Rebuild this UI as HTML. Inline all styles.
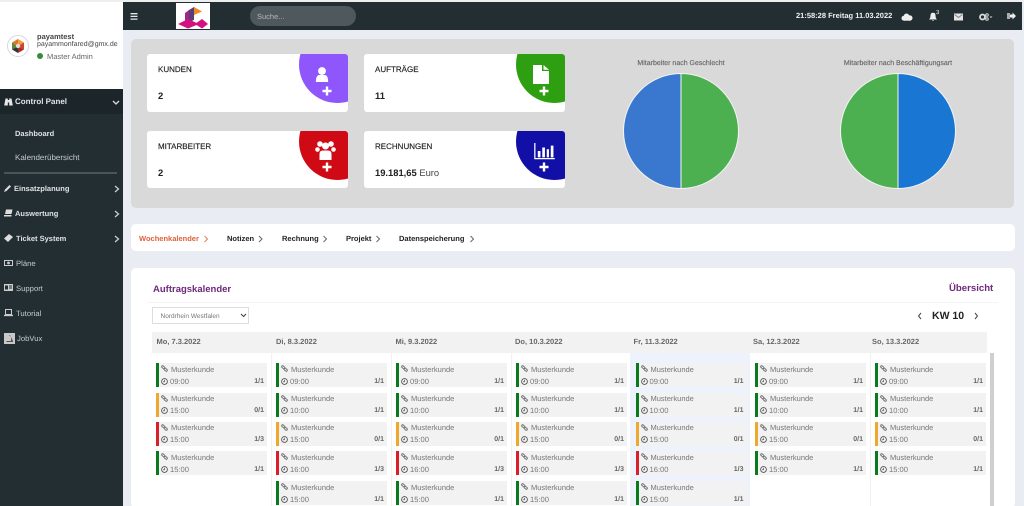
<!DOCTYPE html>
<html lang="de"><head><meta charset="utf-8"><title>Dashboard</title>
<style>
*{box-sizing:border-box}
html,body{margin:0;padding:0;width:1024px;height:506px;overflow:hidden;background:#e9edf3;font-family:"Liberation Sans",sans-serif}
#p{position:relative;width:1024px;height:506px;overflow:hidden;text-rendering:geometricPrecision;filter:blur(.35px);background:#e9edf3}
#p div,#p svg{position:absolute}
.t{position:absolute;white-space:nowrap;line-height:12px;margin-top:1px}
.card{background:#fff;border-radius:3px;overflow:hidden;width:201px;height:58px}
.blob{width:77px;height:77px;border-radius:50%;left:152px;top:-28px}
.ct{left:11px;top:9px;font-size:8px;color:#222;-webkit-text-stroke:.15px #222}
.cv{left:11px;top:34.5px;font-size:9.4px;color:#222;font-weight:bold}
.nav{font-size:7.5px;font-weight:bold;color:#dfe3e4}
.sub{font-size:7.7px;color:#c4cacc}
.bc{font-size:7.5px;font-weight:bold;color:#222;top:232px}
.dh{font-size:7.5px;font-weight:bold;color:#666;top:335px}
.e{width:111px;height:24px;background:#f2f2f2;border-left:3px solid #0a7a1e}
.g{border-left-color:#0a7a1e}.o{border-left-color:#eda92f}.r{border-left-color:#d8202a}
.e span{position:absolute;white-space:nowrap;line-height:12px;margin-top:.7px}
.e .m{left:12px;top:0;font-size:7.5px;color:#777}
.e .h{left:11px;top:12px;font-size:7.6px;color:#777}
.e .n{right:3px;top:12px;font-size:7px;font-weight:bold;color:#666}
.e svg{left:2px;width:7px;height:7px}
.e svg.l{top:2px}.e svg.c{top:14.500px}
</style></head><body>
<div id="p">
<svg width="0" height="0" style="left:0;top:0"><defs>
<symbol id="lk" viewBox="0 0 14 14"><g fill="none" stroke="#777" stroke-width="2"><rect x="1" y="2.500" width="7" height="4" rx="2" transform="rotate(40 4.500 4.500)"/><rect x="6" y="7.500" width="7" height="4" rx="2" transform="rotate(40 9.500 9.500)"/></g></symbol>
<symbol id="ck" viewBox="0 0 14 14"><circle cx="7" cy="7" r="5.800" fill="none" stroke="#555" stroke-width="1.800"/><path d="M7 3.500V7.500H4" fill="none" stroke="#555" stroke-width="1.400"/></symbol>
</defs></svg>

<!-- top strip / top bar -->
<div style="left:0;top:0;width:1024px;height:2px;background:#eeeeee"></div>
<div style="left:123px;top:2px;width:899px;height:28px;background:#232e33"></div>
<svg style="left:130px;top:13px" width="8" height="7" viewBox="0 0 8 7"><path d="M.5 .7H7.500M.5 3.400H7.500M.5 6.100H7.500" stroke="#e6e6e6" stroke-width="1.300"/></svg>
<div style="left:176px;top:3px;width:34px;height:26px;background:#fff"></div>
<svg style="left:176px;top:3px" width="34" height="26" viewBox="0 0 34 26"><path d="M9 10L13 7V19L9 21Z" fill="#a0268a"/><path d="M13 7L18 4V17L13 19Z" fill="#5a3c78"/><path d="M18 4L26 8.500L18 12Z" fill="#f08a1d"/><path d="M2 21L12 16L23 21L12 25.500Z" fill="#d3127f"/><path d="M19 21L26 16L32 21L26 25.500Z" fill="#d3127f"/></svg>
<div style="left:250px;top:6px;width:106px;height:20px;border-radius:10px;background:#4f585c"></div>
<div class="t" style="left:257px;top:9.500px;font-size:7.500px;color:#b4b8ba">Suche...</div>
<div class="t" style="left:796px;top:8.500px;font-size:7.500px;font-weight:bold;color:#f0f0f0">21:58:28 Freitag 11.03.2022</div>
<svg style="left:901px;top:13px" width="12" height="8" viewBox="0 0 12 8"><circle cx="3" cy="5.200" r="2.500" fill="#eee"/><circle cx="5.500" cy="3.200" r="2.700" fill="#eee"/><circle cx="8.800" cy="5" r="2.700" fill="#eee"/><rect x="3" y="5" width="6" height="2.700" fill="#eee"/></svg>
<svg style="left:927.500px;top:12px" width="10" height="9" viewBox="0 0 10 9"><path d="M1 7.500Q2.500 6 2.500 3.500Q2.500 .8 5 .8Q7.500 .8 7.500 3.500Q7.500 6 9 7.500ZM4 8H6L5 9Z" fill="#eee"/></svg>
<div class="t" style="left:936px;top:6px;font-size:6px;color:#eee">3</div>
<svg style="left:954px;top:13px" width="9" height="8" viewBox="0 0 9 8"><rect width="9" height="7" y=".5" fill="#e4e4e4"/><path d="M.5 1.500L4.500 4.500L8.500 1.500" fill="none" stroke="#777" stroke-width=".8"/></svg>
<svg style="left:979px;top:12.500px" width="14" height="8" viewBox="0 0 14 8"><circle cx="3.500" cy="4" r="2.500" fill="none" stroke="#ddd" stroke-width="1.800"/><circle cx="8" cy="2" r="1.300" fill="none" stroke="#ddd"/><circle cx="8" cy="6" r="1.300" fill="none" stroke="#ddd"/><path d="M10.500 3.500H13.500L12 5Z" fill="#ddd"/></svg>
<svg style="left:1007px;top:12px" width="9" height="8" viewBox="0 0 9 8"><path d="M0 1H3V7H0Z" fill="#aaa"/><path d="M3 2.500H5.500V.5L9 4L5.500 7.500V5.500H3Z" fill="#eee"/></svg>

<!-- sidebar -->
<div style="left:0;top:2px;width:123px;height:87px;background:#fff"></div>
<div style="left:0;top:89px;width:123px;height:417px;background:#232e33"></div>
<div style="left:0;top:89px;width:123px;height:25px;background:#1b252a"></div>
<div style="left:7px;top:35px;width:22px;height:22px;border-radius:50%;background:#fff;border:1.500px solid #d5d8de"></div>
<svg style="left:10px;top:38px" width="16" height="16" viewBox="0 0 16 16"><path d="M8 8L8 1L14 4.500Z" fill="#e8a33a"/><path d="M8 8L14 4.500V11.500Z" fill="#d4432a"/><path d="M8 8L14 11.500L8 15Z" fill="#a82e24"/><path d="M8 8L8 15L2 11.500Z" fill="#333"/><path d="M8 8L2 11.500V4.500Z" fill="#5a8a3a"/><path d="M8 8L2 4.500L8 1Z" fill="#e8702a"/><circle cx="8" cy="8" r="2.200" fill="#ddd"/></svg>
<div class="t" style="left:37px;top:29.500px;font-size:7.500px;font-weight:bold;color:#444">payamtest</div>
<div class="t" style="left:37px;top:37.500px;font-size:7px;color:#444">payammonfared@gmx.de</div>
<div style="left:37px;top:53px;width:6px;height:6px;border-radius:50%;background:#3a8a3a"></div>
<div class="t" style="left:47px;top:50px;font-size:7.500px;color:#666">Master Admin</div>

<svg style="left:4px;top:97px" width="9" height="9" viewBox="0 0 9 9"><path d="M.2 8.500L1.500 1.500H3.800V8.500ZM5.200 8.500V1.500H7.500L8.800 8.500ZM3.800 3H5.200V5.500H3.800Z" fill="#e6e6e6"/></svg>
<div class="t nav" style="left:15px;top:95px;font-size:8px">Control Panel</div>
<svg style="left:112px;top:100px" width="8" height="5" viewBox="0 0 8 5"><path d="M1 1L4 4L7 1" fill="none" stroke="#ddd" stroke-width="1.300"/></svg>
<div class="t nav" style="left:15px;top:127px">Dashboard</div>
<div class="t sub" style="left:15px;top:151px;font-size:8px">Kalenderübersicht</div>
<div style="left:4px;top:172px;width:113px;height:1.500px;background:#4a5557"></div>
<svg style="left:4px;top:184px" width="8" height="8" viewBox="0 0 8 8"><path d="M0 8L1 5.500L5.500 1L7 2.500L2.500 7Z" fill="#ddd"/></svg>
<div class="t nav" style="left:14px;top:182px">Einsatzplanung</div>
<svg style="left:114px;top:185px" width="6" height="8" viewBox="0 0 6 8"><path d="M1 1L4.500 4L1 7" fill="none" stroke="#ccc" stroke-width="1.300"/></svg>
<svg style="left:4px;top:209px" width="9" height="8" viewBox="0 0 9 8"><path d="M2 .5H8.500L7.500 5H1ZM0 6H7.500V7.500H0Z" fill="#ddd"/></svg>
<div class="t nav" style="left:15px;top:207px">Auswertung</div>
<svg style="left:114px;top:210px" width="6" height="8" viewBox="0 0 6 8"><path d="M1 1L4.500 4L1 7" fill="none" stroke="#ccc" stroke-width="1.300"/></svg>
<svg style="left:4px;top:234px" width="9" height="8" viewBox="0 0 9 8"><path d="M0 4.500L5 0L9 3L4 8Z" fill="#ddd"/></svg>
<div class="t nav" style="left:16px;top:232px">Ticket System</div>
<svg style="left:114px;top:235px" width="6" height="8" viewBox="0 0 6 8"><path d="M1 1L4.500 4L1 7" fill="none" stroke="#ccc" stroke-width="1.300"/></svg>
<svg style="left:4px;top:260px" width="9" height="6" viewBox="0 0 9 6"><rect x=".5" y=".5" width="8" height="5" fill="none" stroke="#ccc"/><circle cx="4.500" cy="3" r="1.400" fill="#ccc"/></svg>
<div class="t sub" style="left:16px;top:257px">Pläne</div>
<svg style="left:4px;top:284px" width="9" height="8" viewBox="0 0 9 8"><rect width="9" height="7" fill="#ccc"/><rect x="1" y="1.500" width="3" height="4" fill="#232e33"/><path d="M5 2H8M5 4H8" stroke="#232e33"/></svg>
<div class="t sub" style="left:16px;top:282px">Support</div>
<svg style="left:4px;top:309px" width="9" height="8" viewBox="0 0 9 8"><rect x="1.500" y=".5" width="6" height="5" fill="none" stroke="#ccc"/><path d="M0 6.500H9" stroke="#ccc" stroke-width="1.300"/></svg>
<div class="t sub" style="left:16px;top:307px">Tutorial</div>
<div style="left:4px;top:333px;width:11px;height:11px;background:#c8c8c8"></div>
<svg style="left:5px;top:334px" width="9" height="9" viewBox="0 0 9 9"><path d="M4 1L6 3V7H2L1 8H8V7L6.500 4L5 1Z" fill="#555"/></svg>
<div class="t sub" style="left:17px;top:332px">JobVux</div>

<!-- panel -->
<div style="left:131px;top:39px;width:883px;height:169px;background:#d9d9d9;border-radius:5px"></div>

<div class="card" style="left:147px;top:54px"><div class="blob" style="background:#8f56fb"></div>
<div class="t ct">KUNDEN</div><div class="t cv">2</div>
<svg style="left:168px;top:12px" width="14" height="17" viewBox="0 0 16 18"><circle cx="8" cy="5" r="4.500" fill="#fff"/><path d="M1 17.500Q1 9.500 5 9.500H11Q15 9.500 15 17.500Z" fill="#fff"/></svg>
<svg style="left:175px;top:32px" width="10" height="10" viewBox="0 0 10 10"><path d="M5 .5V9.500M.5 5H9.500" stroke="#fff" stroke-width="2.400"/></svg></div>

<div class="card" style="left:364px;top:54px"><div class="blob" style="background:#2f9f12"></div>
<div class="t ct">AUFTRÄGE</div><div class="t cv">11</div>
<svg style="left:169px;top:11px" width="16" height="19" viewBox="0 0 16 19"><path d="M0 0H9V6H16V19H0ZM10.500 0L16 4.800H10.500Z" fill="#fff"/></svg>
<svg style="left:175px;top:32px" width="10" height="10" viewBox="0 0 10 10"><path d="M5 .5V9.500M.5 5H9.500" stroke="#fff" stroke-width="2.400"/></svg></div>

<div class="card" style="left:147px;top:131px;height:57px"><div class="blob" style="background:#d00a15"></div>
<div class="t ct">MITARBEITER</div><div class="t cv">2</div>
<svg style="left:168px;top:10px" width="21" height="20" viewBox="0 0 21 20"><circle cx="5" cy="3" r="2.800" fill="#fff"/><circle cx="16" cy="3" r="2.800" fill="#fff"/><circle cx="10.500" cy="5" r="3.500" fill="#fff"/><circle cx="2.500" cy="8.500" r="2.300" fill="#fff"/><circle cx="18.500" cy="8.500" r="2.300" fill="#fff"/><path d="M4.500 19V13Q4.500 9.500 8 9.500H13Q16.500 9.500 16.500 13V19Z" fill="#fff"/></svg>
<svg style="left:175px;top:31px" width="10" height="10" viewBox="0 0 10 10"><path d="M5 .5V9.500M.5 5H9.500" stroke="#fff" stroke-width="2.400"/></svg></div>

<div class="card" style="left:364px;top:131px;height:57px"><div class="blob" style="background:#110fa6"></div>
<div class="t ct">RECHNUNGEN</div><div class="t cv">19.181,65 <span style="font-weight:normal;color:#444">Euro</span></div>
<svg style="left:169px;top:12px" width="23" height="17" viewBox="0 0 23 19"><path d="M.7 0V17.500H23" fill="none" stroke="#fff" stroke-width="1.400"/><path d="M4 9H7V16H4ZM9 5H12V16H9ZM14 7H16.500V16H14ZM18.500 3H21.500V16H18.500Z" fill="#fff"/></svg>
<svg style="left:175px;top:31px" width="10" height="10" viewBox="0 0 10 10"><path d="M5 .5V9.500M.5 5H9.500" stroke="#fff" stroke-width="2.400"/></svg></div>

<div class="t" style="left:581px;width:200px;text-align:center;top:57px;font-size:7px;color:#666;-webkit-text-stroke:.15px #666">Mitarbeiter nach Geschlecht</div>
<div class="t" style="left:798px;width:200px;text-align:center;top:57px;font-size:7px;color:#666;-webkit-text-stroke:.15px #666">Mitarbeiter nach Beschäftigungsart</div>
<svg style="left:622px;top:72px" width="118" height="118" viewBox="0 0 118 118"><path d="M59 1.500A57.500 57.500 0 0 0 59 116.500Z" fill="#3a78d0" stroke="#f4f4f4"/><path d="M59 1.500A57.500 57.500 0 0 1 59 116.500Z" fill="#4caf50" stroke="#f4f4f4"/></svg>
<svg style="left:839px;top:72px" width="118" height="118" viewBox="0 0 118 118"><path d="M59 1.500A57.500 57.500 0 0 0 59 116.500Z" fill="#4caf50" stroke="#f4f4f4"/><path d="M59 1.500A57.500 57.500 0 0 1 59 116.500Z" fill="#1976d2" stroke="#f4f4f4"/></svg>

<!-- breadcrumbs -->
<div style="left:131px;top:224px;width:884px;height:27px;background:#fff;border-radius:5px"></div>
<div class="t bc" style="left:139px;color:#e0603a">Wochenkalender</div>
<div class="t bc" style="left:227px">Notizen</div>
<div class="t bc" style="left:282px">Rechnung</div>
<div class="t bc" style="left:346px">Projekt</div>
<div class="t bc" style="left:399px">Datenspeicherung</div>
<svg style="left:0;top:0" width="1024" height="506"><g fill="none" stroke="#666" stroke-width="1"><path d="M204.500 236L207.500 239L204.500 242" stroke="#e0805a"/><path d="M259 236L262 239L259 242"/><path d="M323.500 236L326.500 239L323.500 242"/><path d="M376.500 236L379.500 239L376.500 242"/><path d="M470.500 236L473.500 239L470.500 242"/></g></svg>

<!-- calendar -->
<div style="left:131px;top:268px;width:884px;height:240px;background:#fff;border-radius:5px"></div>
<div class="t" style="left:153px;top:283px;font-size:9.500px;font-weight:bold;color:#6f2a7c">Auftragskalender</div>
<div class="t" style="left:949px;top:282px;font-size:9.600px;font-weight:bold;color:#6f2a7c">Übersicht</div>
<div style="left:148px;top:302px;width:850px;height:1px;background:#f4f4f4"></div>
<div style="left:152px;top:307px;width:97px;height:17px;background:#fff;border:1px solid #ddd"></div>
<div class="t" style="left:160.500px;top:310px;font-size:6.500px;color:#777">Nordrhein Westfalen</div>
<svg style="left:240px;top:313px" width="7" height="5" viewBox="0 0 7 5"><path d="M1 1L3.500 3.500L6 1" fill="none" stroke="#444" stroke-width="1.100"/></svg>
<svg style="left:917px;top:312px" width="6" height="8" viewBox="0 0 6 8"><path d="M4 1L1.500 4L4 7" fill="none" stroke="#444" stroke-width="1"/></svg>
<div class="t" style="left:932px;top:309px;font-size:10.500px;font-weight:bold;color:#222">KW 10</div>
<svg style="left:973px;top:312px" width="6" height="8" viewBox="0 0 6 8"><path d="M2 1L4.500 4L2 7" fill="none" stroke="#444" stroke-width="1"/></svg>

<div style="left:152px;top:332px;width:835px;height:21px;background:#f2f2f2"></div>
<div class="t dh" style="left:156.500px">Mo, 7.3.2022</div>
<div class="t dh" style="left:276px">Di, 8.3.2022</div>
<div class="t dh" style="left:395.500px">Mi, 9.3.2022</div>
<div class="t dh" style="left:515px">Do, 10.3.2022</div>
<div class="t dh" style="left:633.500px">Fr, 11.3.2022</div>
<div class="t dh" style="left:753px">Sa, 12.3.2022</div>
<div class="t dh" style="left:872px">So, 13.3.2022</div>
<div style="left:630px;top:353px;width:120px;height:153px;background:#eef2fd"></div>
<div style="left:271px;top:353px;width:1px;height:153px;background:#f1f1f1"></div>
<div style="left:391px;top:353px;width:1px;height:153px;background:#f1f1f1"></div>
<div style="left:511px;top:353px;width:1px;height:153px;background:#f1f1f1"></div>
<div style="left:870px;top:353px;width:1px;height:153px;background:#f1f1f1"></div>
<div style="left:990px;top:353px;width:4px;height:153px;background:#cfcfcf"></div>

<!-- Mo -->
<div class="e g" style="left:156px;top:363px"><span class="m">Musterkunde</span><span class="h">09:00</span><span class="n">1/1</span><svg class="l"><use href="#lk"/></svg><svg class="c"><use href="#ck"/></svg></div>
<div class="e o" style="left:156px;top:392.500px"><span class="m">Musterkunde</span><span class="h">15:00</span><span class="n">0/1</span><svg class="l"><use href="#lk"/></svg><svg class="c"><use href="#ck"/></svg></div>
<div class="e r" style="left:156px;top:421.500px"><span class="m">Musterkunde</span><span class="h">15:00</span><span class="n">1/3</span><svg class="l"><use href="#lk"/></svg><svg class="c"><use href="#ck"/></svg></div>
<div class="e g" style="left:156px;top:451px"><span class="m">Musterkunde</span><span class="h">15:00</span><span class="n">1/1</span><svg class="l"><use href="#lk"/></svg><svg class="c"><use href="#ck"/></svg></div>
<!-- Di -->
<div class="e g" style="left:276px;top:363px"><span class="m">Musterkunde</span><span class="h">09:00</span><span class="n">1/1</span><svg class="l"><use href="#lk"/></svg><svg class="c"><use href="#ck"/></svg></div>
<div class="e g" style="left:276px;top:392.500px"><span class="m">Musterkunde</span><span class="h">10:00</span><span class="n">1/1</span><svg class="l"><use href="#lk"/></svg><svg class="c"><use href="#ck"/></svg></div>
<div class="e o" style="left:276px;top:421.500px"><span class="m">Musterkunde</span><span class="h">15:00</span><span class="n">0/1</span><svg class="l"><use href="#lk"/></svg><svg class="c"><use href="#ck"/></svg></div>
<div class="e r" style="left:276px;top:451px"><span class="m">Musterkunde</span><span class="h">16:00</span><span class="n">1/3</span><svg class="l"><use href="#lk"/></svg><svg class="c"><use href="#ck"/></svg></div>
<div class="e g" style="left:276px;top:481px"><span class="m">Musterkunde</span><span class="h">15:00</span><span class="n">1/1</span><svg class="l"><use href="#lk"/></svg><svg class="c"><use href="#ck"/></svg></div>
<!-- Mi -->
<div class="e g" style="left:396px;top:363px"><span class="m">Musterkunde</span><span class="h">09:00</span><span class="n">1/1</span><svg class="l"><use href="#lk"/></svg><svg class="c"><use href="#ck"/></svg></div>
<div class="e g" style="left:396px;top:392.500px"><span class="m">Musterkunde</span><span class="h">10:00</span><span class="n">1/1</span><svg class="l"><use href="#lk"/></svg><svg class="c"><use href="#ck"/></svg></div>
<div class="e o" style="left:396px;top:421.500px"><span class="m">Musterkunde</span><span class="h">15:00</span><span class="n">0/1</span><svg class="l"><use href="#lk"/></svg><svg class="c"><use href="#ck"/></svg></div>
<div class="e r" style="left:396px;top:451px"><span class="m">Musterkunde</span><span class="h">16:00</span><span class="n">1/3</span><svg class="l"><use href="#lk"/></svg><svg class="c"><use href="#ck"/></svg></div>
<div class="e g" style="left:396px;top:481px"><span class="m">Musterkunde</span><span class="h">15:00</span><span class="n">1/1</span><svg class="l"><use href="#lk"/></svg><svg class="c"><use href="#ck"/></svg></div>
<!-- Do -->
<div class="e g" style="left:516px;top:363px"><span class="m">Musterkunde</span><span class="h">09:00</span><span class="n">1/1</span><svg class="l"><use href="#lk"/></svg><svg class="c"><use href="#ck"/></svg></div>
<div class="e g" style="left:516px;top:392.500px"><span class="m">Musterkunde</span><span class="h">10:00</span><span class="n">1/1</span><svg class="l"><use href="#lk"/></svg><svg class="c"><use href="#ck"/></svg></div>
<div class="e o" style="left:516px;top:421.500px"><span class="m">Musterkunde</span><span class="h">15:00</span><span class="n">0/1</span><svg class="l"><use href="#lk"/></svg><svg class="c"><use href="#ck"/></svg></div>
<div class="e r" style="left:516px;top:451px"><span class="m">Musterkunde</span><span class="h">16:00</span><span class="n">1/3</span><svg class="l"><use href="#lk"/></svg><svg class="c"><use href="#ck"/></svg></div>
<div class="e g" style="left:516px;top:481px"><span class="m">Musterkunde</span><span class="h">15:00</span><span class="n">1/1</span><svg class="l"><use href="#lk"/></svg><svg class="c"><use href="#ck"/></svg></div>
<!-- Fr -->
<div class="e g" style="left:635.500px;top:363px"><span class="m">Musterkunde</span><span class="h">09:00</span><span class="n">1/1</span><svg class="l"><use href="#lk"/></svg><svg class="c"><use href="#ck"/></svg></div>
<div class="e g" style="left:635.500px;top:392.500px"><span class="m">Musterkunde</span><span class="h">10:00</span><span class="n">1/1</span><svg class="l"><use href="#lk"/></svg><svg class="c"><use href="#ck"/></svg></div>
<div class="e o" style="left:635.500px;top:421.500px"><span class="m">Musterkunde</span><span class="h">15:00</span><span class="n">0/1</span><svg class="l"><use href="#lk"/></svg><svg class="c"><use href="#ck"/></svg></div>
<div class="e r" style="left:635.500px;top:451px"><span class="m">Musterkunde</span><span class="h">16:00</span><span class="n">1/3</span><svg class="l"><use href="#lk"/></svg><svg class="c"><use href="#ck"/></svg></div>
<div class="e g" style="left:635.500px;top:481px"><span class="m">Musterkunde</span><span class="h">15:00</span><span class="n">1/1</span><svg class="l"><use href="#lk"/></svg><svg class="c"><use href="#ck"/></svg></div>
<!-- Sa -->
<div class="e g" style="left:755px;top:363px"><span class="m">Musterkunde</span><span class="h">09:00</span><span class="n">1/1</span><svg class="l"><use href="#lk"/></svg><svg class="c"><use href="#ck"/></svg></div>
<div class="e g" style="left:755px;top:392.500px"><span class="m">Musterkunde</span><span class="h">10:00</span><span class="n">1/1</span><svg class="l"><use href="#lk"/></svg><svg class="c"><use href="#ck"/></svg></div>
<div class="e o" style="left:755px;top:421.500px"><span class="m">Musterkunde</span><span class="h">15:00</span><span class="n">0/1</span><svg class="l"><use href="#lk"/></svg><svg class="c"><use href="#ck"/></svg></div>
<div class="e g" style="left:755px;top:451px"><span class="m">Musterkunde</span><span class="h">15:00</span><span class="n">1/1</span><svg class="l"><use href="#lk"/></svg><svg class="c"><use href="#ck"/></svg></div>
<!-- So -->
<div class="e g" style="left:875px;top:363px"><span class="m">Musterkunde</span><span class="h">09:00</span><span class="n">1/1</span><svg class="l"><use href="#lk"/></svg><svg class="c"><use href="#ck"/></svg></div>
<div class="e g" style="left:875px;top:392.500px"><span class="m">Musterkunde</span><span class="h">10:00</span><span class="n">1/1</span><svg class="l"><use href="#lk"/></svg><svg class="c"><use href="#ck"/></svg></div>
<div class="e o" style="left:875px;top:421.500px"><span class="m">Musterkunde</span><span class="h">15:00</span><span class="n">0/1</span><svg class="l"><use href="#lk"/></svg><svg class="c"><use href="#ck"/></svg></div>
<div class="e g" style="left:875px;top:451px"><span class="m">Musterkunde</span><span class="h">15:00</span><span class="n">1/1</span><svg class="l"><use href="#lk"/></svg><svg class="c"><use href="#ck"/></svg></div>
</div>
</body></html>
